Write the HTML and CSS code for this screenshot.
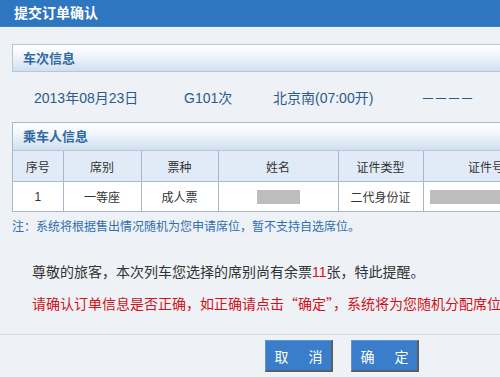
FILE: index.html
```html
<!DOCTYPE html>
<html lang="zh-CN">
<head>
<meta charset="utf-8">
<title>提交订单确认</title>
<link rel="stylesheet" href="styles.css">
</head>
<body>
<div class="page">
  <div class="titlebar">提交订单确认</div>
  <div class="content">
    <div class="section-head">车次信息</div>
    <div class="train">
      <span class="t-date">2013年08月23日</span>
      <span class="t-no">G101次</span>
      <span class="t-station">北京南(07:00开)</span>
      <span class="t-dash">－－－－</span>
    </div>
    <div class="passengers">
      <div class="section-head inner">乘车人信息</div>
      <table class="ptable">
        <colgroup>
          <col class="c1"><col class="c2"><col class="c3"><col class="c4"><col class="c5"><col class="c6">
        </colgroup>
        <thead>
          <tr><th>序号</th><th>席别</th><th>票种</th><th>姓名</th><th>证件类型</th><th>证件号码</th></tr>
        </thead>
        <tbody>
          <tr>
            <td>1</td><td>一等座</td><td>成人票</td>
            <td><span class="blur blur-name"></span></td>
            <td>二代身份证</td>
            <td class="left"><span class="blur blur-id"></span></td>
          </tr>
        </tbody>
      </table>
    </div>
    <div class="note">注：系统将根据售出情况随机为您申请席位，暂不支持自选席位。</div>
  </div>
  <div class="message">
    <p class="msg">尊敬的旅客，本次列车您选择的席别尚有余票<span class="num">11</span>张，特此提醒。</p>
    <p class="warn">请确认订单信息是否正确，如正确请点击<span class="q">“</span>确定<span class="q">”</span>，系统将为您随机分配席位。</p>
  </div>
  <div class="actions">
    <button class="btn btn-cancel">取　消</button>
    <button class="btn btn-ok">确　定</button>
  </div>
</div>
</body>
</html>
```
FILE: styles.css
```css
html, body {
  margin: 0;
  padding: 0;
  background: #eef1f5;
  overflow: hidden;
}
body {
  font-family: "Liberation Sans", "Noto Sans CJK SC", sans-serif;
  width: 500px;
  height: 377px;
}
.page {
  width: 500px;
  height: 377px;
  overflow: hidden;
}
.titlebar {
  height: 26px;
  line-height: 26px;
  background: #2e76bf;
  color: #ffffff;
  font-weight: bold;
  font-size: 14px;
  padding-left: 14px;
  border-bottom: 1px solid #3a84cc;
}
.content {
  width: 600px;
  padding: 17px 0 0 12px;
}
.section-head {
  box-sizing: border-box;
  height: 28px;
  line-height: 27px;
  border: 1px solid #b9c6d4;
  background: linear-gradient(to bottom, #ffffff 0%, #f3f7fc 35%, #cfdff1 100%);
  color: #2f6aa3;
  font-weight: bold;
  font-size: 13px;
  padding-left: 10px;
}
.train {
  display: flex;
  height: 50px;
  align-items: center;
  padding-left: 22px;
  font-size: 14px;
  color: #2c5b8b;
}
.t-date { width: 150px; }
.t-no { width: 89px; }
.t-station { width: 148px; }
.t-dash { letter-spacing: -1px; color: #2c5b8b; }
.passengers {
  border: 1px solid #a9b8c8;
  border-right: none;
}
.section-head.inner {
  border: none;
  height: 28px;
  border-bottom: 1px solid #b9c6d4;
}
.ptable {
  border-collapse: collapse;
  table-layout: fixed;
  width: 548px;
  font-size: 12px;
  color: #333333;
}
.ptable col.c1 { width: 50px; }
.ptable col.c2 { width: 78px; }
.ptable col.c3 { width: 77px; }
.ptable col.c4 { width: 120px; }
.ptable col.c5 { width: 85px; }
.ptable col.c6 { width: 138px; }
.ptable th, .ptable td {
  border: 1px solid #a9b8c8;
  text-align: center;
  font-weight: normal;
  padding: 0;
  white-space: nowrap;
}
.ptable tr > :first-child { border-left: none; }
.ptable tr:last-child td { border-bottom: none; }
.ptable thead tr > th { border-top: none; }
.ptable th {
  height: 30px;
  background: #e1ebf7;
}
.ptable td {
  height: 29px;
  background: #ffffff;
}
.ptable td.left { text-align: left; }
.blur {
  display: inline-block;
  height: 14px;
  background: #bdbdbd;
  vertical-align: middle;
}
.blur-name { width: 43px; }
.blur-id { width: 110px; margin-left: 6px; }
.note {
  margin-top: 5px;
  height: 20px;
  line-height: 20px;
  font-size: 12px;
  color: #2f6fb0;
  white-space: nowrap;
}
.message {
  padding: 25px 0 0 32px;
  height: 72px;
  border-bottom: 1px solid #d3d9e0;
}
.message p {
  margin: 0;
  font-size: 14px;
  line-height: 20px;
  white-space: nowrap;
}
.msg { color: #333333; }
.msg .num { color: #d7111b; }
.warn {
  margin-top: 11px !important;
  color: #d0121b;
}
.warn .q {
  font-family: "Noto Sans CJK SC", sans-serif;
}
.actions {
  display: flex;
  gap: 18px;
  padding: 5px 0 0 265px;
}
.btn {
  width: 68px;
  height: 32px;
  box-sizing: border-box;
  background: #3a7dca;
  color: #ffffff;
  border: 1px solid #5f95d6;
  border-right: 2px solid #5a5f66;
  border-bottom: 2px solid #5a5f66;
  font-family: "Noto Sans CJK SC", sans-serif;
  font-size: 14px;
  letter-spacing: 3px;
  text-indent: 3px;
  padding: 0;
  line-height: 28px;
}
```
